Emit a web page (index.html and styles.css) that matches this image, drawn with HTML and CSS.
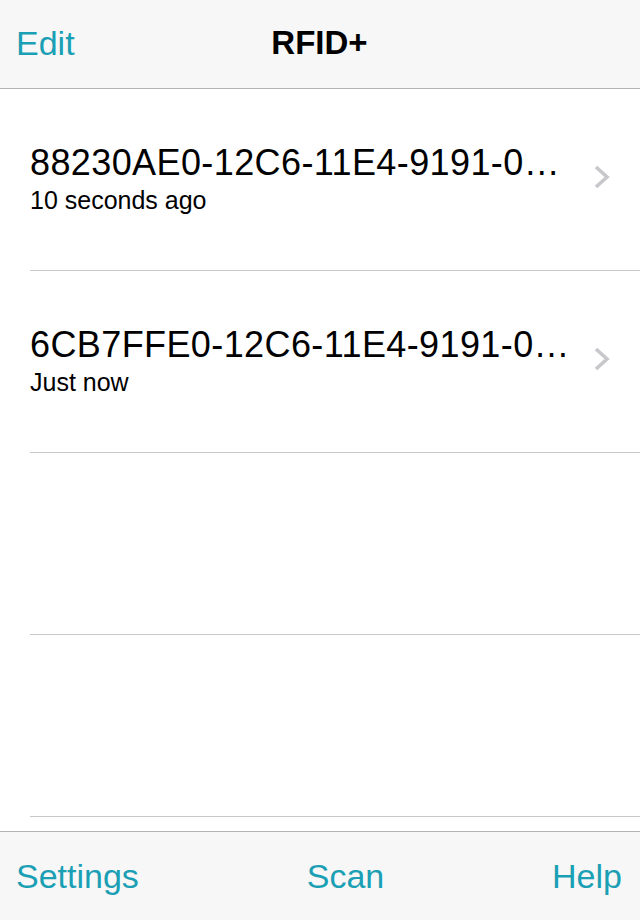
FILE: index.html
```html
<!DOCTYPE html>
<html>
<head>
<meta charset="utf-8">
<link rel="stylesheet" href="styles.css">
</head>
<body>
<div class="app">
  <header class="navbar">
    <span class="nav-btn">Edit</span>
    <span class="nav-title">RFID+</span>
    <span class="nav-spacer"></span>
  </header>
  <main class="list">
    <div class="row">
      <div class="row-text">
        <div class="row-title">88230AE0-12C6-11E4-9191-0…</div>
        <div class="row-sub">10 seconds ago</div>
      </div>
      <svg class="chev" width="18" height="24" viewBox="0 0 18 24"><path d="M3 2 L14 12 L3 22" fill="none" stroke="#c7c7cc" stroke-width="3.6"/></svg>
    </div>
    <div class="row">
      <div class="row-text">
        <div class="row-title">6CB7FFE0-12C6-11E4-9191-0…</div>
        <div class="row-sub">Just now</div>
      </div>
      <svg class="chev" width="18" height="24" viewBox="0 0 18 24"><path d="M3 2 L14 12 L3 22" fill="none" stroke="#c7c7cc" stroke-width="3.6"/></svg>
    </div>
    <div class="row empty"></div>
    <div class="row empty"></div>
  </main>
  <footer class="toolbar">
    <span class="tool-btn">Settings</span>
    <span class="tool-btn">Scan</span>
    <span class="tool-btn">Help</span>
  </footer>
</div>
</body>
</html>
```
FILE: styles.css
```css
* { box-sizing: border-box; }
html, body { margin: 0; padding: 0; }
body {
  width: 640px;
  height: 920px;
  overflow: hidden;
  font-family: "Liberation Sans", Arial, sans-serif;
  background: #fff;
}
.app {
  display: flex;
  flex-direction: column;
  height: 920px;
}
.navbar {
  height: 89px;
  flex: none;
  background: #f7f7f7;
  border-bottom: 1px solid #b2b2b2;
  display: flex;
  align-items: center;
  padding: 0 17px 2px 16px;
}
.nav-btn {
  color: #1a9fb4;
  font-size: 34px;
  width: 120px;
}
.nav-title {
  flex: 1;
  text-align: center;
  font-size: 33px;
  font-weight: bold;
  color: #000;
}
.nav-spacer { width: 120px; }
.list {
  flex: 1;
  overflow: hidden;
}
.row {
  height: 182px;
  margin-left: 30px;
  border-bottom: 1px solid #c8c7cc;
  display: flex;
  align-items: center;
  padding-right: 29px;
}
.row-text {
  flex: 1;
  min-width: 0;
  padding-bottom: 2px;
}
.row-title {
  font-size: 36px;
  letter-spacing: 0.4px;
  color: #000;
  white-space: nowrap;
  line-height: 42px;
}
.row-sub {
  font-size: 25px;
  color: #000;
  line-height: 32px;
}
.chev {
  flex: none;
  margin-left: 8px;
  margin-bottom: 6px;
}
.toolbar {
  height: 89px;
  flex: none;
  background: #f7f7f7;
  border-top: 1px solid #b2b2b2;
  display: flex;
  align-items: center;
  justify-content: space-between;
  padding: 0 18px 0 16px;
}
.tool-btn {
  color: #1a9fb4;
  font-size: 34px;
}
```
